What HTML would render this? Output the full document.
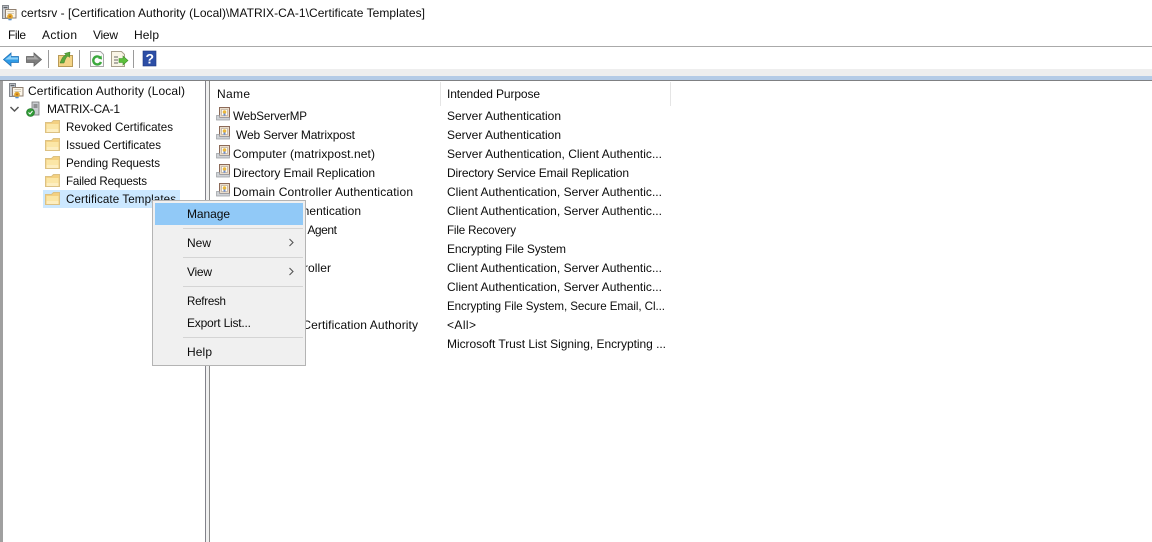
<!DOCTYPE html>
<html>
<head>
<meta charset="utf-8">
<style>
html,body{margin:0;padding:0;background:#fff;overflow:hidden}
svg{display:block;position:absolute;left:0;top:0}
text{font-family:"Liberation Sans",sans-serif;font-size:12px;fill:#0c0c0c}
text.t{font-size:11.6px}
</style>
</head>
<body>
<svg width="1152" height="542" viewBox="0 0 1152 542" xmlns="http://www.w3.org/2000/svg">
<defs>
<g id="folder">
  <path d="M.5 2.500 V12.500 H14.500 V.5 H8.500 L6.500 2.500 H.5Z" fill="#f3d081" stroke="#dcc183"/>
  <path d="M1.500 4H13.500V12H1.500Z" fill="#fbe6a6"/>
  <path d="M1.500 9H13.500V12H1.500Z" fill="#fdeec0"/>
</g>
<g id="cert">
  <rect x="3.500" y=".5" width="10" height="10" fill="#e9dccb" stroke="#8c6a58"/>
  <rect x="5.500" y="2.500" width="6" height="6" fill="#fffdf6" stroke="#b9aa9a" stroke-width=".7"/>
  <circle cx="8.500" cy="5" r="1.800" fill="#e9b73c"/>
  <path d="M7.500 6.500V8.800H9.500V6.500Z" fill="#6f8fcf"/>
  <path d="M.5 8.500H3.500V10.500H13.500V13H.5Z" fill="#cfd2d6" stroke="#9a9da2" stroke-width=".7"/>
</g>
<g id="bigcert">
  <rect x="1.500" y=".5" width="6" height="13" fill="#c9cdd2" stroke="#6b6f75" stroke-width=".8"/>
  <rect x="2.500" y="1.800" width="4" height="1.400" fill="#5c6066"/>
  <rect x="4.500" y="4.500" width="10.500" height="8.500" fill="#fbf5e8" stroke="#8f7f70"/>
  <path d="M6.500 6.500H13M6.500 8.500H13" stroke="#c9bda9" stroke-width=".8"/>
  <circle cx="9" cy="11.500" r="2.800" fill="#e2a62c"/>
  <circle cx="9" cy="11.500" r="1" fill="#bf6e1c"/>
  <path d="M7 13.800l1 2 1-1 1 1 1-2" fill="#4f8bd0"/>
</g>
</defs>

<!-- top chrome -->
<rect x="0" y="46" width="1152" height="1" fill="#aaaaaa"/>
<rect x="0" y="69" width="1152" height="7" fill="#eeeeee"/>
<rect x="0" y="76" width="1152" height="4" fill="#b4cbe6"/>
<rect x="0" y="80" width="1152" height="1" fill="#7f8082"/>

<!-- panes -->
<rect x="0" y="81" width="3" height="461" fill="#a0a0a0"/>
<rect x="205" y="81" width="1" height="461" fill="#82828a"/>
<rect x="206" y="81" width="3" height="461" fill="#f0f0f0"/>
<rect x="209" y="81" width="1" height="461" fill="#8a8a8a"/>

<!-- title icon -->
<use href="#bigcert" x="1" y="5"/>
<text x="21" y="17" textLength="404" lengthAdjust="spacing">certsrv - [Certification Authority (Local)\MATRIX-CA-1\Certificate Templates]</text>

<!-- menubar -->
<text x="8" y="39" textLength="18" lengthAdjust="spacing">File</text>
<text x="42" y="39" textLength="35" lengthAdjust="spacing">Action</text>
<text x="93" y="39" textLength="25" lengthAdjust="spacing">View</text>
<text x="134" y="39" textLength="25" lengthAdjust="spacing">Help</text>

<!-- toolbar -->
<path d="M3.500 59.500 L11 53 V56.500 H18.500 V62.500 H11 V66Z" fill="#2f9be6" stroke="#1f6fb5" stroke-width=".8"/>
<path d="M5 59.500 L11 55 V57.500 H18 V59.500Z" fill="#8fd0f7"/>
<path d="M41.500 59.500 L34 53 V56.500 H26.500 V62.500 H34 V66Z" fill="#7d7d7d" stroke="#606060" stroke-width=".8"/>
<path d="M27 57.500H34V55L39 59.500H27Z" fill="#a8a8a8"/>
<rect x="48" y="50" width="1" height="18" fill="#9a9a9a"/>
<path d="M58.500 55.500 H72.500 V66.500 H58.500Z" fill="#f4d486" stroke="#b89a58"/>
<path d="M60 63 C62 58 63 56 66 55 L64.500 53.500 L70 52 L69.500 57.500 L68 56 C66 57 65 60 64 63Z" fill="#5aa83c" stroke="#3f7f28" stroke-width=".5"/>
<rect x="79" y="50" width="1" height="18" fill="#9a9a9a"/>
<path d="M90.500 51.500 H100.500 L103.500 54.500 V66.500 H90.500Z" fill="#fbfbfb" stroke="#a8a8a8"/>
<path d="M100 57.500 A4 4 0 1 0 101 62" fill="none" stroke="#3aa83c" stroke-width="2.400"/>
<path d="M98 58.500 L102 59.500 L101.500 55.500Z" fill="#3aa83c"/>
<path d="M111.500 51.500 H121.500 L124.500 54.500 V66.500 H111.500Z" fill="#f9f5e6" stroke="#a8a08c"/>
<path d="M114 57h4M114 60h4M114 63h4" stroke="#666" stroke-width="1"/>
<path d="M119 58.500 H123 V56 L128 60.500 L123 65 V62.500 H119Z" fill="#5cc03c" stroke="#3d8f28" stroke-width=".6"/>
<rect x="133" y="50" width="1" height="18" fill="#9a9a9a"/>
<rect x="143" y="51" width="13" height="15" fill="#2c4ea6" stroke="#1c3580" stroke-width=".6"/>
<text x="145.500" y="63.500" style="font-size:14px;font-weight:bold;fill:#fff">?</text>

<!-- tree -->
<rect x="43" y="190" width="137" height="18" fill="#cce8ff"/>
<use href="#bigcert" x="8" y="83"/>
<text x="28" y="95" textLength="157" lengthAdjust="spacing">Certification Authority (Local)</text>
<path d="M10.500 107 L14.500 111 L18.500 107" fill="none" stroke="#555" stroke-width="1.500"/>
<rect x="32" y="102" width="7" height="13" fill="#c9ccd0" stroke="#777" stroke-width=".8"/>
<path d="M33.500 105h4M33.500 107h4" stroke="#555"/>
<circle cx="30.500" cy="112.500" r="4" fill="#2f9a35" stroke="#1f6d25" stroke-width=".6"/>
<path d="M28.500 112.500 L30 114 L32.500 111" fill="none" stroke="#fff" stroke-width="1"/>
<text x="47" y="113" textLength="73" lengthAdjust="spacing">MATRIX-CA-1</text>
<use href="#folder" x="45" y="120"/>
<use href="#folder" x="45" y="138"/>
<use href="#folder" x="45" y="156"/>
<use href="#folder" x="45" y="174"/>
<use href="#folder" x="45" y="192"/>
<text class="t" x="66" y="131" textLength="107" lengthAdjust="spacing">Revoked Certificates</text>
<text class="t" x="66" y="149" textLength="95" lengthAdjust="spacing">Issued Certificates</text>
<text class="t" x="66" y="167" textLength="94" lengthAdjust="spacing">Pending Requests</text>
<text class="t" x="66" y="185" textLength="81" lengthAdjust="spacing">Failed Requests</text>
<text class="t" x="66" y="203" textLength="110" lengthAdjust="spacing">Certificate Templates</text>

<!-- list header -->
<rect x="440" y="82" width="1" height="24" fill="#e5e5e5"/>
<rect x="670" y="82" width="1" height="24" fill="#e5e5e5"/>
<text x="217" y="98" textLength="33" lengthAdjust="spacing">Name</text>
<text x="447" y="98" textLength="93" lengthAdjust="spacing">Intended Purpose</text>

<!-- list rows -->
<use href="#cert" x="216" y="107"/>
<use href="#cert" x="216" y="126"/>
<use href="#cert" x="216" y="145"/>
<use href="#cert" x="216" y="164"/>
<use href="#cert" x="216" y="183"/>
<text class="t" x="233" y="120" textLength="74" lengthAdjust="spacing">WebServerMP</text>
<text x="236" y="139" textLength="119" lengthAdjust="spacing">Web Server Matrixpost</text>
<text x="233" y="158" textLength="142" lengthAdjust="spacing">Computer (matrixpost.net)</text>
<text x="233" y="177" textLength="142" lengthAdjust="spacing">Directory Email Replication</text>
<text x="233" y="196" textLength="180" lengthAdjust="spacing">Domain Controller Authentication</text>
<text x="233" y="215" textLength="128" lengthAdjust="spacing">Kerberos Authentication</text>
<text x="233" y="234" textLength="104" lengthAdjust="spacing">EFS Recovery Agent</text>
<text x="233" y="272" textLength="98" lengthAdjust="spacing">Domain Controller</text>
<text x="233" y="329" textLength="185" lengthAdjust="spacing">Subordinate Certification Authority</text>

<text x="447" y="120" textLength="114" lengthAdjust="spacing">Server Authentication</text>
<text x="447" y="139" textLength="114" lengthAdjust="spacing">Server Authentication</text>
<text x="447" y="158" textLength="215" lengthAdjust="spacing">Server Authentication, Client Authentic...</text>
<text x="447" y="177" textLength="182" lengthAdjust="spacing">Directory Service Email Replication</text>
<text x="447" y="196" textLength="215" lengthAdjust="spacing">Client Authentication, Server Authentic...</text>
<text x="447" y="215" textLength="215" lengthAdjust="spacing">Client Authentication, Server Authentic...</text>
<text class="t" x="447" y="234" textLength="69" lengthAdjust="spacing">File Recovery</text>
<text x="447" y="253" textLength="119" lengthAdjust="spacing">Encrypting File System</text>
<text x="447" y="272" textLength="215" lengthAdjust="spacing">Client Authentication, Server Authentic...</text>
<text x="447" y="291" textLength="215" lengthAdjust="spacing">Client Authentication, Server Authentic...</text>
<text class="t" x="447" y="310" textLength="218" lengthAdjust="spacing">Encrypting File System, Secure Email, Cl...</text>
<text x="447" y="329" textLength="29" lengthAdjust="spacing">&lt;All&gt;</text>
<text x="447" y="348" textLength="219" lengthAdjust="spacing">Microsoft Trust List Signing, Encrypting ...</text>

<!-- context menu -->
<rect x="152.500" y="200.500" width="153" height="165" fill="#f0f0f0" stroke="#b4b4b4"/>
<rect x="155" y="203" width="148" height="22" fill="#91c9f7"/>
<rect x="183" y="228" width="120" height="1" fill="#d4d4d4"/>
<rect x="183" y="257" width="120" height="1" fill="#d4d4d4"/>
<rect x="183" y="286" width="120" height="1" fill="#d4d4d4"/>
<rect x="183" y="337" width="120" height="1" fill="#d4d4d4"/>
<text x="187" y="218" textLength="43" lengthAdjust="spacing">Manage</text>
<text x="187" y="247" textLength="24" lengthAdjust="spacing">New</text>
<text x="187" y="276" textLength="25" lengthAdjust="spacing">View</text>
<text class="t" x="187" y="305" textLength="39" lengthAdjust="spacing">Refresh</text>
<text x="187" y="327" textLength="64" lengthAdjust="spacing">Export List...</text>
<text x="187" y="356" textLength="25" lengthAdjust="spacing">Help</text>
<path d="M289.500 239 L293 242.500 L289.500 246" fill="none" stroke="#555" stroke-width="1.100"/>
<path d="M289.500 268 L293 271.500 L289.500 275" fill="none" stroke="#555" stroke-width="1.100"/>
</svg>
</body>
</html>
